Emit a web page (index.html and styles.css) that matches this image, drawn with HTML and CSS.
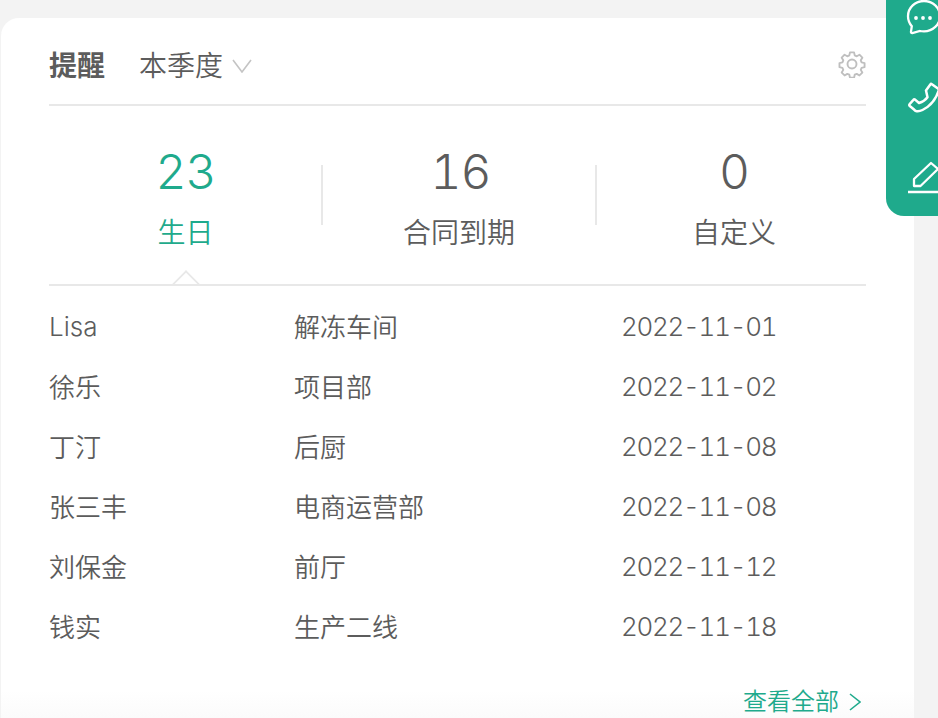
FILE: index.html
```html
<!DOCTYPE html>
<html lang="zh-CN">
<head>
<meta charset="utf-8">
<title>提醒</title>
<link rel="stylesheet" href="styles.css">
</head>
<body>
<main class="card">
  <header class="head">
    <h1 class="title">提醒</h1>
    <span class="period">本季度</span>
    <svg class="chev" width="20" height="14" viewBox="0 0 20 14"><path d="M1 1l9 12 9-12" fill="none" stroke="#c4c4c4" stroke-width="1.6"/></svg>
    <svg class="gear" width="28" height="28" viewBox="0 0 28 28"><path d="M11.800 1.500h4.400l.7 3.200 2.200 1 2.900-1.700 3.100 3.200-1.700 2.800.9 2.300 3.200.7v4.400l-3.200.7-.9 2.200 1.700 2.900-3.100 3.100-2.900-1.700-2.200.9-.7 3.200h-4.400l-.7-3.200-2.200-.9-2.900 1.700-3.100-3.100 1.700-2.900-.9-2.200-3.200-.7v-4.400l3.200-.7.9-2.300-1.700-2.800 3.100-3.200 2.900 1.700 2.200-1z" transform="translate(1 1) scale(.93)" fill="none" stroke="#bfbfbf" stroke-width="2" stroke-linejoin="round"/><circle cx="14" cy="14" r="4.500" fill="none" stroke="#bfbfbf" stroke-width="1.900"/></svg>
  </header>
  <section class="stats">
    <div class="stat active"><div class="num">23</div><div class="label">生日</div></div>
    <div class="stat"><div class="num num-mid">16</div><div class="label">合同到期</div></div>
    <div class="stat stat-last"><div class="num">0</div><div class="label">自定义</div></div>
    <span class="notch"></span>
  </section>
  <ul class="list">
    <li class="row"><span class="en">Lisa</span><span class="zh">解冻车间</span><span class="date">2022-11-01</span></li>
    <li class="row"><span class="zh">徐乐</span><span class="zh">项目部</span><span class="date">2022-11-02</span></li>
    <li class="row"><span class="zh">丁汀</span><span class="zh">后厨</span><span class="date">2022-11-08</span></li>
    <li class="row"><span class="zh">张三丰</span><span class="zh">电商运营部</span><span class="date">2022-11-08</span></li>
    <li class="row"><span class="zh">刘保金</span><span class="zh">前厅</span><span class="date">2022-11-12</span></li>
    <li class="row"><span class="zh">钱实</span><span class="zh">生产二线</span><span class="date">2022-11-18</span></li>
  </ul>
  <a class="more">查看全部<svg class="more-arrow" width="12" height="18" viewBox="0 0 12 18"><path d="M1 1l10 8-10 8" fill="none" stroke="#1faa8c" stroke-width="1.600"/></svg></a>
</main>
<aside class="side">
  <svg class="side-icon" width="32" height="40" viewBox="0 0 32 40"><path d="M18 3c8.800 0 16 6.800 16 15.200s-7.200 15.200-16 15.200c-1.500 0-2.800-.1-4-.4L6.300 35c-.9.100-1.400-.4-1.300-1.300l.8-5.500C3.500 25.500 2 22 2 18.200 2 9.800 9.200 3 18 3z" fill="none" stroke="#fff" stroke-width="2.300"/><circle cx="10" cy="20" r="1.900" fill="#fff"/><circle cx="17" cy="20" r="1.900" fill="#fff"/><circle cx="24" cy="20" r="1.900" fill="#fff"/></svg>
  <svg class="side-icon" width="32" height="40" viewBox="0 0 32 40"><path d="M20 12.500l4.300-6c.4-.6 1-.7 1.600-.3l6 4.300c.8.600 1 1.300.7 2.300C30 21 24.500 28 16.500 32c-2.500 1.200-5 1.500-6.500 1-.8-.3-1.200-.7-1.700-1.200L3.800 28c-.7-.7-.7-1.300-.1-2l3.700-4.200c.5-.6 1.100-.6 1.700-.2l3.900 3.400c3.500-1 6.500-3 8.500-5.800z" fill="none" stroke="#fff" stroke-width="2.500" stroke-linejoin="round"/></svg>
  <svg class="side-icon" width="32" height="40" viewBox="0 0 32 40"><path d="M8 28v-7L25 5l7 6-17.500 17z" fill="none" stroke="#fff" stroke-width="2.300" stroke-linejoin="round"/><path d="M2 34h30" stroke="#fff" stroke-width="2.500"/></svg>
</aside>
</body>
</html>
```

FILE: styles.css
```css
* { box-sizing: border-box; }
html, body { height: 100%; }
body {
  margin: 0;
  height: 718px;
  overflow: hidden;
  background: #f3f3f3;
  color: #5c5c5c;
  font-family: "Inter", "Noto Sans CJK SC", sans-serif;
  font-variant-numeric: tabular-nums;
  padding: 18px 24px 0 1px;
}
.card {
  height: 700px;
  background: linear-gradient(#fff 0, #fff 672px, #fbfbfb 700px);
  border-radius: 18px 18px 0 0;
  padding: 0 48px;
}
.head {
  height: 88px;
  padding-top: 7px;
  display: flex;
  align-items: center;
  border-bottom: 2px solid #e8e8e8;
}
.title {
  margin: 3px 34px 0 0;
  font-size: 28px;
  line-height: 36px;
  font-weight: 700;
}
.period { margin-top: 3px; font-size: 28px; line-height: 36px; font-weight: 350; }
.chev { margin-left: 9px; margin-top: 2px; }
.gear { margin-left: auto; margin-top: -2px; }
.stats {
  position: relative;
  height: 180px;
  display: grid;
  grid-template-columns: 273px 274px 1fr;
  border-bottom: 2px solid #e8e8e8;
  padding-top: 38px;
}
.stat {
  height: 105px;
  display: flex;
  flex-direction: column;
  align-items: center;
  position: relative;
}
.stat + .stat::before {
  content: "";
  position: absolute;
  left: -1px;
  top: 21px;
  width: 2px;
  height: 60px;
  background: #e8e8e8;
}
.stat-last { margin-right: -6px; }
.num { font-size: 48px; line-height: 56px; font-weight: 350; letter-spacing: -1px; }
.num-mid { margin-left: 3px; }
.label { font-size: 28px; line-height: 40px; margin-top: 13px; font-weight: 350; }
.stat.active { color: #1faa8c; }
.notch {
  position: absolute;
  left: 127px;
  bottom: -10px;
  width: 20px;
  height: 20px;
  background: #fff;
  border-top: 2px solid #e8e8e8;
  border-left: 2px solid #e8e8e8;
  transform: rotate(45deg);
  clip-path: polygon(0 0, 100% 0, 0 100%);
}
.list { list-style: none; margin: 11px 0 0; padding: 0; }
.row {
  height: 60px;
  display: grid;
  grid-template-columns: 245px 328px 1fr;
  align-items: center;
  font-size: 26px;
  font-weight: 350;
}
.zh { margin-bottom: 4px; }
.en { margin-bottom: 2px; }
.date { margin-bottom: 2px; margin-left: -1px; letter-spacing: -1.3px; }
.more {
  position: absolute;
  left: 743px;
  top: 684px;
  display: flex;
  align-items: center;
  gap: 10px;
  color: #1faa8c;
  font-size: 24px;
  line-height: 36px;
  font-weight: 350;
}
.side {
  position: absolute;
  left: 886px;
  top: -2px;
  width: 52px;
  height: 218px;
  background: #1faa8c;
  border-radius: 0 0 0 18px;
  display: flex;
  flex-direction: column;
  gap: 40px;
  padding-left: 20px;
  overflow: hidden;
}
.side-icon { flex: none; }
```
